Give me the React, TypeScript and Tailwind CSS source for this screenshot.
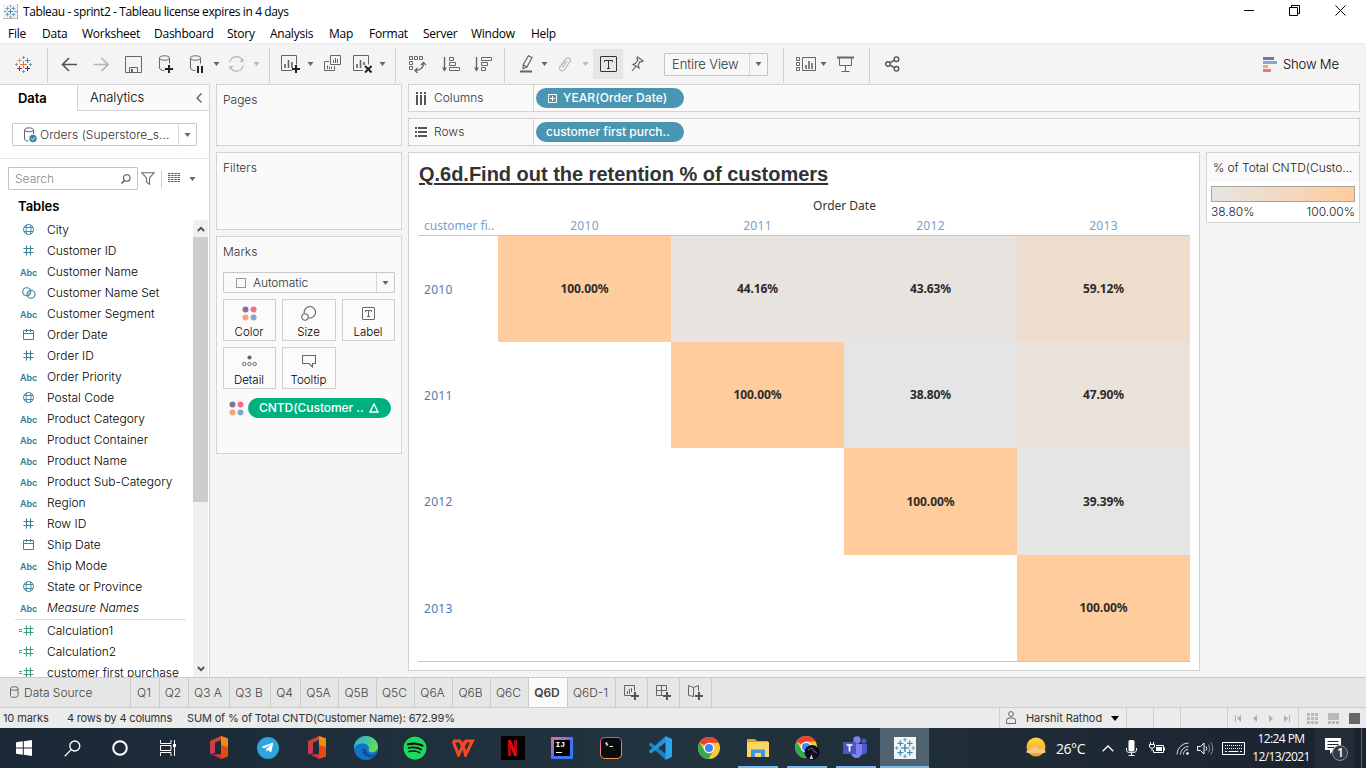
import type { ReactNode } from "react";
import { FaSpotify, FaTelegramPlane } from "react-icons/fa";

const seg = "font-['Open_Sans','Noto_Sans',sans-serif]";

function Svg({ w, h, children, className = "" }: { w: number; h: number; children: ReactNode; className?: string }) {
  return (
    <svg width={w} height={h} viewBox={`0 0 ${w} ${h}`} fill="none" className={`block shrink-0 ${className}`}>
      {children}
    </svg>
  );
}

function Caret({ color = "#666", className = "" }: { color?: string; className?: string }) {
  return (
    <Svg w={7} h={4} className={className}>
      <path d="M.5 0H6.5L3.5 4Z" fill={color} />
    </Svg>
  );
}

function Slot({ className, children }: { className: string; children?: ReactNode }) {
  return <div className={`flex h-full shrink-0 items-center justify-center ${className}`}>{children}</div>;
}

const Sep = () => <div className="mt-[4px] h-[35px] w-px shrink-0 self-start bg-[#d0d0d0]" />;

function TableauMark({ colors, size }: { colors: string[]; size: number }) {
  const [c, a, b, d, e, f, g] = colors;
  return (
    <svg width={size} height={size} viewBox="0 0 17 17" fill="none" className="block">
      <path d="M8.5 5V12M5 8.5H12" stroke={c} />
      <path d="M4.5 2V7M2 4.5H7" stroke={a} />
      <path d="M12.5 2V7M10 4.5H15" stroke={b} />
      <path d="M4.5 10V15M2 12.5H7" stroke={d} />
      <path d="M12.5 10V15M10 12.5H15" stroke={e} />
      <path d="M8.5 0V3M7 1.5H10M8.5 14V17M7 15.5H10" stroke={f} />
      <path d="M1.5 7V10M0 8.5H3M15.5 7V10M14 8.5H17" stroke={g} />
    </svg>
  );
}

const blues = ["#2b6ea3", "#3f8fbd", "#3f8fbd", "#3f8fbd", "#3f8fbd", "#5a9fc6", "#5a9fc6"];

function TitleBar() {
  return (
    <div className={`flex h-6 items-start bg-white text-[12px] text-black ${seg}`}>
      <div className="ml-[3px] mt-[4px] flex h-[15px] w-[15px] items-center justify-center border-b border-r border-[#b5b5b5] bg-[#f5f5f5]">
        <TableauMark colors={blues} size={13} />
      </div>
      <span className="ml-[5px] mt-[4px] whitespace-nowrap leading-4 tracking-[-0.39px]">
        Tableau - sprint2 - Tableau license expires in 4 days
      </span>
      <div className="ml-auto flex">
        <Svg w={10} h={12} className="mr-[35px] mt-[5px]">
          <path d="M0 5.5H10" stroke="#000" />
        </Svg>
        <Svg w={11} h={11} className="mr-[35px] mt-[5px]">
          <path d="M.5 2.5H8.5V10.5H.5ZM2.5 2.5V.5H10.5V8.5H8.5" stroke="#000" />
        </Svg>
        <Svg w={11} h={11} className="mr-[20px] mt-[5px]">
          <path d="M.5.5L10.5 10.5M10.5.5L.5 10.5" stroke="#000" />
        </Svg>
      </div>
    </div>
  );
}

const menus: [string, string][] = [
  ["File", "w-[34px]"],
  ["Data", "w-[40px]"],
  ["Worksheet", "w-[72px]"],
  ["Dashboard", "w-[73px]"],
  ["Story", "w-[43px]"],
  ["Analysis", "w-[59px]"],
  ["Map", "w-[40px]"],
  ["Format", "w-[54px]"],
  ["Server", "w-[48px]"],
  ["Window", "w-[60px]"],
  ["Help", "w-[40px]"],
];

function MenuBar() {
  return (
    <div className={`flex h-[19px] bg-white pl-[8px] text-[12px] leading-[19px] tracking-[-0.25px] text-black ${seg}`}>
      {menus.map(([m, w]) => (
        <span key={m} className={`${w} whitespace-nowrap`}>
          {m}
        </span>
      ))}
    </div>
  );
}

const Database = ({ children }: { children?: ReactNode }) => (
  <Svg w={15} h={19}>
    <path d="M1.5 3.5V13C1.5 14.5 3.5 15.5 6.5 15.5M11.5 3.5V8.5" stroke="#666" />
    <ellipse cx="6.5" cy="3" rx="5" ry="2.2" stroke="#666" />
    {children}
  </Svg>
);

const LabelBox = ({ size, color }: { size: "lg" | "sm"; color: string }) => (
  <div
    className={
      size === "lg"
        ? "flex h-4 w-[17px] items-center justify-center rounded-[1px] border border-[#333]"
        : "flex h-[13px] w-[13px] items-center justify-center rounded-[1px] border border-[#666]"
    }
  >
    <Svg w={size === "lg" ? 9 : 7} h={size === "lg" ? 9 : 7}>
      {size === "lg" ? (
        <path d="M.5 2V.5H8.5V2M4.5.5V8.5M3 8.5H6" stroke={color} />
      ) : (
        <path d="M.5 2V.5H6.5V2M3.5.5V6.5M2 6.5H5" stroke={color} />
      )}
    </Svg>
  </div>
);

function Toolbar() {
  return (
    <div className="flex h-[41px] items-center border-t border-[#ececec] bg-[#f4f4f4]">
      <Slot className="w-[47px]">
        <TableauMark colors={["#e8762c", "#e8a15c", "#5b879b", "#c72035", "#1f447e", "#7199a6", "#7b9db5"]} size={17} />
      </Slot>
      <Sep />
      <Slot className="w-[43px]">
        <Svg w={17} h={15}>
          <path d="M1.5 7.5H16M8 1L1.5 7.5L8 14" stroke="#555" strokeWidth="1.6" />
        </Svg>
      </Slot>
      <Slot className="w-[21px]">
        <Svg w={17} h={15}>
          <path d="M.5 7.5H15M8.5 1L15 7.5L8.5 14" stroke="#b4b4b4" strokeWidth="1.6" />
        </Svg>
      </Slot>
      <Slot className="w-[43px]">
        <Svg w={17} h={17}>
          <path d="M.5.5H16.5V16.5H.5ZM4.5 16.5V11.5H12.5V16.5" stroke="#666" />
          <path d="M6 13H8V16H6Z" fill="#666" />
        </Svg>
      </Slot>
      <Slot className="w-[20px]">
        <Database>
          <path d="M11 10V18M7 14H15" stroke="#222" strokeWidth="2" />
        </Database>
      </Slot>
      <Slot className="w-[42px]">
        <Database>
          <path d="M9 11V18M13 11V18" stroke="#222" strokeWidth="2" />
        </Database>
      </Slot>
      <Caret className="-ml-[4px]" />
      <Slot className="w-[33px]">
        <Svg w={17} h={16}>
          <path d="M2 6A6.5 6.5 0 0 1 14.5 5M15 9.5A6.5 6.5 0 0 1 2.5 11" stroke="#b9b9b9" strokeWidth="1.3" />
          <path d="M15.500 2V6H11.500ZM1.500 14V10H5.500Z" fill="#b9b9b9" />
        </Svg>
      </Slot>
      <Caret color="#b9b9b9" />
      <div className="w-[9px]" />
      <Sep />
      <Slot className="w-[41px]">
        <Svg w={19} h={18}>
          <path d="M11 15.5H.5V.5H15.5V9.5" stroke="#666" />
          <path d="M4 9V13M7.5 5V13M11 7V13" stroke="#666" strokeWidth="1.6" />
          <path d="M15 10V18M11 14H19" stroke="#222" strokeWidth="2" />
        </Svg>
      </Slot>
      <Caret className="-ml-[4px]" />
      <Slot className="w-[36px]">
        <Svg w={17} h={16} className="-mt-[2px]">
          <path d="M6.5.5H16.5V9.5H6.5ZM5 6.5H.5V15.5H10.5V11" stroke="#666" />
          <path d="M9.5 5V8M11.5 3V8M13.5 4V8M3.5 10.5V14M5.5 11.5V14M7.5 11.5V14" stroke="#666" />
        </Svg>
      </Slot>
      <Slot className="w-[25px]">
        <Svg w={19} h={18}>
          <path d="M10 15.5H.5V.5H15.5V9.5" stroke="#666" />
          <path d="M4 9V13M7.5 5V13M11 7V10" stroke="#666" strokeWidth="1.6" />
          <path d="M12 11L18.5 17.5M18.5 11L12 17.5" stroke="#222" strokeWidth="2" />
        </Svg>
      </Slot>
      <Caret className="ml-[4px]" />
      <div className="w-[9px]" />
      <Sep />
      <Slot className="w-[43px]">
        <Svg w={17} h={17}>
          <path d="M.5.5H3.5V3.5H.5ZM5.500 .5H8.500V3.5H5.500ZM10.500.5H13.500V3.5H10.500ZM.5 5.500H3.5V8.500H.5ZM.5 10.500H3.5V13.500H.5Z" stroke="#666" />
          <path d="M6 14.5C11.500 14.5 14.5 12 14.5 7M12 9L14.5 6.5L17 9M8.500 12L6 14.5L8.500 17" stroke="#666" strokeWidth="1.3" />
        </Svg>
      </Slot>
      <Slot className="w-[23px]">
        <Svg w={18} h={15}>
          <path d="M2.5 0V14" stroke="#666" strokeWidth="1.4" />
          <path d="M0 10.5H5L2.5 14.5Z" fill="#666" />
          <path d="M7.5.5H11.5V3.5H7.5ZM7.5 5.5H13.5V8.5H7.5ZM7.5 10.5H17.5V13.5H7.5Z" stroke="#666" />
        </Svg>
      </Slot>
      <Slot className="w-[42px]">
        <Svg w={18} h={15}>
          <path d="M2.5 0V14" stroke="#666" strokeWidth="1.4" />
          <path d="M0 10.5H5L2.5 14.5Z" fill="#666" />
          <path d="M7.5.5H17.5V3.5H7.5ZM7.5 5.5H13.5V8.5H7.5ZM7.5 10.5H11.5V13.5H7.5Z" stroke="#666" />
        </Svg>
      </Slot>
      <Sep />
      <Slot className="w-[43px]">
        <Svg w={13} h={18}>
          <path d="M8.5.8L12 2.5L7 12L3 13.5L3.2 9.8ZM3.5 10L6.8 11.8" stroke="#666" strokeWidth="1.2" />
          <path d="M0 16.5H12" stroke="#666" strokeWidth="2" />
        </Svg>
      </Slot>
      <Caret className="-ml-[7px]" />
      <Slot className="w-[34px]">
        <Svg w={14} h={16}>
          <path
            d="M3.5 9.5L8 3C10 .5 13.5 2.5 12 5.5L6.5 13.5C4.5 16.5.3 14 2 10.8L7 3.5M4.2 11.8L9 5"
            stroke="#b9b9b9"
            strokeWidth="1.2"
          />
        </Svg>
      </Slot>
      <Caret color="#b9b9b9" />
      <div className="w-[4px]" />
      <div className="flex h-[30px] w-[30px] items-center justify-center bg-[#e6e6e6]">
        <LabelBox size="lg" color="#333" />
      </div>
      <Slot className="w-[28px]">
        <Svg w={13} h={16}>
          <path d="M6.5 1L12 4.8L10.8 5.8L9 5.5L7.3 9L8 12L2 8.3L4.5 7.5L6.8 4.2L6 2.5ZM5 10L1 15" stroke="#666" strokeWidth="1.2" />
        </Svg>
      </Slot>
      <div className="ml-[13px] flex h-[23px] w-[104px] items-center rounded-[1px] border border-[#c4c4c4] bg-[#f7f7f7]">
        <span className="w-[84px] whitespace-nowrap pl-[7px] font-['Inter',sans-serif] text-[13px] font-light leading-5 tracking-[-0.1px] text-[#333]">
          Entire View
        </span>
        <div className="h-full w-px bg-[#d6d6d6]" />
        <Caret className="ml-[5px]" />
      </div>
      <div className="w-[15px]" />
      <Sep />
      <Slot className="w-[44px]">
        <Svg w={20} h={14}>
          <path d="M.5.5H3.5V3.5H.5ZM.5 5.5H3.5V8.5H.5ZM.5 10.5H3.5V13.5H.5ZM6.5.5H19.5V13.5H6.5Z" stroke="#666" />
          <path d="M10 8V12M13 4V12M16 6V12" stroke="#666" strokeWidth="1.6" />
        </Svg>
      </Slot>
      <Caret className="-ml-[8px]" />
      <Slot className="w-[37px]">
        <Svg w={17} h={16}>
          <path d="M0 1.5H17" stroke="#666" strokeWidth="2" />
          <path d="M2.5 2V9.5H14.5V2M8.5 10V15M4.5 15.5H12.5" stroke="#666" />
        </Svg>
      </Slot>
      <div className="w-[5px]" />
      <Sep />
      <Slot className="w-[45px]">
        <Svg w={15} h={16}>
          <g stroke="#555" strokeWidth="1.4">
            <circle cx="3" cy="8" r="2.3" />
            <circle cx="11.5" cy="3.2" r="2.3" />
            <circle cx="11.5" cy="12.8" r="2.3" />
            <path d="M5 6.8L9.5 4.2M5 9.2L9.5 11.8" />
          </g>
        </Svg>
      </Slot>
      <Svg w={14} h={15} className="ml-auto">
        <path d="M0 0H11V3H0Z" fill="#85709c" />
        <path d="M0 4H14V7H0Z" fill="#86a8ce" />
        <path d="M0 8H5V11H0Z" fill="#f5a67c" />
        <path d="M0 12H8V15H0Z" fill="#f96d7f" />
      </Svg>
      <span className="ml-[6px] w-[83px] whitespace-nowrap font-['Inter',sans-serif] text-[13px] font-light leading-5 tracking-[-0.15px] text-black">
        Show Me
      </span>
    </div>
  );
}

type Kind = "geo" | "num" | "abc" | "set" | "date" | "calc";
const fields: [string, Kind][] = [
  ["City", "geo"],
  ["Customer ID", "num"],
  ["Customer Name", "abc"],
  ["Customer Name Set", "set"],
  ["Customer Segment", "abc"],
  ["Order Date", "date"],
  ["Order ID", "num"],
  ["Order Priority", "abc"],
  ["Postal Code", "geo"],
  ["Product Category", "abc"],
  ["Product Container", "abc"],
  ["Product Name", "abc"],
  ["Product Sub-Category", "abc"],
  ["Region", "abc"],
  ["Row ID", "num"],
  ["Ship Date", "date"],
  ["Ship Mode", "abc"],
  ["State or Province", "geo"],
  ["Measure Names", "abc"],
];
const calcs = ["Calculation1", "Calculation2", "customer first purchase"];

function FieldIcon({ kind }: { kind: Kind }) {
  if (kind === "abc")
    return (
      <span className="pt-px font-['Inter',sans-serif] text-[9px] font-semibold leading-none tracking-[-0.1px] text-[#357c99]">
        Abc
      </span>
    );
  if (kind === "num")
    return (
      <Svg w={11} h={11}>
        <path d="M3.5.5V10.5M7.5.5V10.5M.5 3.5H10.5M.5 7.5H10.5" stroke="#3f819d" strokeWidth="1.1" />
      </Svg>
    );
  if (kind === "calc")
    return (
      <Svg w={15} h={11} className="-ml-[5px]">
        <path d="M7.5.5V10.5M11.5.5V10.5M4.5 3.5H14.5M4.5 7.5H14.5M0 4.5H3M0 6.5H3" stroke="#3f9f7d" strokeWidth="1.1" />
      </Svg>
    );
  if (kind === "date")
    return (
      <Svg w={11} h={11}>
        <path d="M.5 1.5H10.5V10.5H.5ZM.5 4.5H10.5M3.5 0V3M7.5 0V3" stroke="#3f819d" />
      </Svg>
    );
  if (kind === "set")
    return (
      <Svg w={14} h={12}>
        <circle cx="4.7" cy="4.7" r="4" stroke="#3f819d" strokeWidth="1.1" />
        <circle cx="9" cy="7.3" r="4" stroke="#3f819d" strokeWidth="1.1" />
        <path d="M5.5 5.5L7.5 3.8M6 7.5L8.5 5" stroke="#3f819d" />
      </Svg>
    );
  return (
    <Svg w={11} h={11}>
      <circle cx="5.500" cy="5.500" r="5" stroke="#3f86a5" />
      <path d="M3.500 1Q2.500 5.500 3.500 10M7.500 1Q8.500 5.500 7.500 10M1 3.500H10M1 7.500H10" stroke="#4a8dab" />
    </Svg>
  );
}

function Field({ name, kind }: { name: string; kind: Kind }) {
  return (
    <div className="flex h-[21px] items-center">
      <div className="flex w-[47px] shrink-0 items-center justify-center pl-[10px]">
        <FieldIcon kind={kind} />
      </div>
      <span
        className={`whitespace-nowrap font-['Inter',sans-serif] text-[12px] font-light leading-[21px] text-black ${
          name === "Measure Names" ? "italic" : ""
        }`}
      >
        {name}
      </span>
    </div>
  );
}

function DataPane() {
  return (
    <div className="flex h-full w-[210px] shrink-0 flex-col border-r border-t border-[#d4d4d4] bg-white font-['Inter',sans-serif]">
      <div className="flex h-[26px] shrink-0">
        <div className="w-[77px] pl-[18px] text-[13px] font-semibold leading-[26px] tracking-[-0.1px] text-black">Data</div>
        <div className="flex flex-1 items-center border-b border-l border-[#d4d4d4] bg-[#fafafa] pl-[12px] text-[13px] font-light tracking-[-0.1px] text-black">
          Analytics
          <Svg w={6} h={10} className="ml-auto mr-[7px]">
            <path d="M5.5.5L1 5L5.5 9.5" stroke="#555" strokeWidth="1.2" />
          </Svg>
        </div>
      </div>
      <div className="ml-[12px] mt-[12px] flex h-[23px] w-[185px] shrink-0 items-center rounded-[1px] border border-[#c8c8c8] pl-[10px]">
        <Svg w={14} h={16}>
          <path d="M1.5 3V12C1.5 13.2 3 14 5.5 14M10.5 3V7" stroke="#666" />
          <ellipse cx="6" cy="2.8" rx="4.5" ry="2" stroke="#666" />
          <circle cx="10" cy="11.5" r="3.7" fill="#3e85a3" />
          <path d="M8.2 11.5L9.6 12.9L12 10.2" stroke="#fff" />
        </Svg>
        <span className="ml-[3px] w-[129px] whitespace-nowrap text-[12px] font-light tracking-[0.05px] text-[#333]">Orders (Superstore_s...</span>
        <div className="ml-[9px] h-full w-px bg-[#d8d8d8]" />
        <Caret className="ml-[5px]" />
      </div>
      <div className="mt-[12px] h-px shrink-0 bg-[#e2e2e2]" />
      <div className="ml-[8px] mt-[8px] flex h-[23px] shrink-0 items-center">
        <div className="flex h-[23px] w-[130px] items-center rounded-[1px] border border-[#c4c4c4] pl-[6px]">
          <span className="text-[12px] font-light text-[#888]">Search</span>
          <Svg w={10} h={10} className="ml-auto mr-[6px]">
            <circle cx="5.8" cy="4" r="3.3" stroke="#555" strokeWidth="1.1" />
            <path d="M3.5 6.3L.5 9.5" stroke="#555" strokeWidth="1.3" />
          </Svg>
        </div>
        <Svg w={14} h={13} className="ml-[3px]">
          <path d="M.8.8H13L8.5 6V12.3L5.5 9.8V6Z" stroke="#666" strokeWidth="1.1" />
        </Svg>
        <div className="ml-[6px] h-[18px] w-px bg-[#d0d0d0]" />
        <Svg w={12} h={9} className="-mt-[2px] ml-[6px]">
          <path d="M0 .5H12M0 2.500H12M0 4.500H12M0 6.5H12M0 8.500H12" stroke="#555" strokeDasharray="2.4 .8" />
        </Svg>
        <Caret className="ml-[9px]" />
      </div>
      <div className="ml-[18px] mt-[6px] h-5 shrink-0 text-[13px] font-semibold leading-5 text-black">Tables</div>
      <div className="mt-[4px] flex min-h-0 flex-1 overflow-hidden">
        <div className="-mt-px w-[193px]">
          {fields.map(([n, k]) => (
            <Field key={n} name={n} kind={k} />
          ))}
          <div className="ml-[15px] mr-[7px] mt-px h-px bg-[#dcdcdc]" />
          {calcs.map((n) => (
            <Field key={n} name={n} kind="calc" />
          ))}
        </div>
        <div className="flex w-[15px] flex-col items-center bg-[#f0f0f0]">
          <div className="flex h-[17px] shrink-0 items-center">
            <Svg w={8} h={6}>
              <path d="M.8 5L4 1.8L7.2 5" stroke="#505050" strokeWidth="1.8" />
            </Svg>
          </div>
          <div className="h-[265px] w-full shrink-0 bg-[#cdcdcd]" />
          <Svg w={8} h={6} className="mb-[5px] mt-auto">
            <path d="M.8 1L4 4.2L7.2 1" stroke="#505050" strokeWidth="1.8" />
          </Svg>
        </div>
      </div>
    </div>
  );
}

const Dots = () => (
  <Svg w={15} h={15}>
    <circle cx="3.5" cy="3.5" r="3" fill="#8a7099" />
    <circle cx="11.5" cy="3.5" r="3" fill="#f96d7f" />
    <circle cx="3.5" cy="11.5" r="3" fill="#f2a67c" />
    <circle cx="11.5" cy="11.5" r="3" fill="#82a6cc" />
  </Svg>
);

function MarkButton({ label, className, children }: { label: string; className: string; children: ReactNode }) {
  return (
    <div className={`flex h-[42px] flex-col items-center border border-[#d0d0d0] bg-[#fbfbfb] pr-px ${className}`}>
      <div className="mt-[5px] flex h-[17px] items-center">{children}</div>
      <span className="mt-[2px] text-[11.5px] font-light leading-4 text-black">{label}</span>
    </div>
  );
}

function Cards() {
  return (
    <div className="ml-[6px] flex w-[186px] shrink-0 flex-col gap-[6px] font-['Inter',sans-serif] text-[12px] font-light text-[#333]">
      <div className="h-[62px] border border-[#d4d4d4] bg-[#fafafa] pl-[6px] pt-[5px] leading-5">Pages</div>
      <div className="h-[78px] border border-[#d4d4d4] bg-[#fafafa] pl-[6px] pt-[5px] leading-5">Filters</div>
      <div className="h-[218px] border border-[#d4d4d4] bg-[#fafafa] px-[6px] pt-[5px]">
        <div className="leading-5">Marks</div>
        <div className="mt-[10px] flex h-[21px] items-center rounded-[1px] border border-[#c8c8c8] pl-[12px]">
          <div className="h-[10px] w-[10px] border border-[#999]" />
          <span className="ml-[7px] w-[123px] text-[12px] tracking-[-0.1px]">Automatic</span>
          <div className="h-full w-px bg-[#d8d8d8]" />
          <Caret className="ml-[5px]" />
        </div>
        <div className="mt-[6px] flex flex-wrap gap-[6px]">
          <MarkButton label="Color" className="w-[53px]">
            <Dots />
          </MarkButton>
          <MarkButton label="Size" className="w-[54px]">
            <Svg w={15} h={15}>
              <path d="M3.3 7.5A5.7 5.7 0 1 1 7.5 11.8" stroke="#666" strokeWidth="1.1" />
              <circle cx="4" cy="11" r="3.2" stroke="#666" strokeWidth="1.1" />
            </Svg>
          </MarkButton>
          <MarkButton label="Label" className="w-[53px]">
            <LabelBox size="sm" color="#666" />
          </MarkButton>
          <MarkButton label="Detail" className="w-[53px]">
            <Svg w={15} h={12} className="-mt-[2px]">
              <circle cx="7.5" cy="2.5" r="2.1" fill="#666" />
              <g stroke="#666">
                <circle cx="2.3" cy="9" r="1.7" />
                <circle cx="7.5" cy="9" r="1.7" />
                <circle cx="12.7" cy="9" r="1.7" />
              </g>
            </Svg>
          </MarkButton>
          <MarkButton label="Tooltip" className="w-[54px]">
            <Svg w={14} h={14} className="-mt-[2px]">
              <path d="M.5 1.5H13.5V9.5H10.5V13L7 9.5H.5Z" stroke="#666" strokeWidth="1.1" />
            </Svg>
          </MarkButton>
        </div>
        <div className="-mr-px mt-[9px] flex items-center pl-[6px]">
          <Dots />
          <div className="ml-[4px] flex h-5 w-[143px] items-center rounded-full bg-[#00b180] pl-[11px] text-[12px] font-medium tracking-[-0.05px] text-white">
            <span className="w-[110px] whitespace-nowrap">CNTD(Customer ..</span>
            <Svg w={10} h={10}>
              <path d="M5 1L9 9H1Z" stroke="#fff" strokeWidth="1.3" />
            </Svg>
          </div>
        </div>
      </div>
    </div>
  );
}

function Shelf({ label, icon, children }: { label: string; icon: ReactNode; children: ReactNode }) {
  return (
    <div className="flex h-[28px] w-[952px] shrink-0 items-center border border-[#d4d4d4] bg-[#fafafa] text-[12px] font-light text-[#333]">
      <div className="flex h-full w-[125px] items-center border-r border-[#d4d4d4] pl-[6px]">
        {icon}
        <span className="ml-[7px]">{label}</span>
      </div>
      <div className="ml-[2px] flex h-5 w-[148px] items-center rounded-full bg-[#4996b2] text-[12px] font-medium text-white">
        {children}
      </div>
    </div>
  );
}

const years = ["2010", "2011", "2012", "2013"];
type Cell = [string, string] | null;
const grid: Cell[][] = [
  [["100.00%", "bg-[#ffcc9e]"], ["44.16%", "bg-[#e7e3df]"], ["43.63%", "bg-[#e7e3df]"], ["59.12%", "bg-[#eedccd]"]],
  [null, ["100.00%", "bg-[#ffcc9e]"], ["38.80%", "bg-[#e5e5e5]"], ["47.90%", "bg-[#e9e1da]"]],
  [null, null, ["100.00%", "bg-[#ffcc9e]"], ["39.39%", "bg-[#e5e5e4]"]],
  [null, null, null, ["100.00%", "bg-[#ffcc9e]"]],
];
const rowHeights = ["h-[106px]", "h-[106px]", "h-[107px]", "h-[106px]"];

function Sheet() {
  return (
    <div className="flex h-[519px] w-[792px] flex-col border border-[#d4d4d4] bg-white px-[9px] font-['Noto_Sans',sans-serif] text-[12px]">
      <div className="mt-[8px] h-[26px] pl-[1px] font-['Liberation_Sans',sans-serif] text-[20px] font-bold leading-[26px] tracking-[-0.02px] text-[#333] underline decoration-2 underline-offset-[2px]">
        Q.6d.Find out the retention % of customers
      </div>
      <div className="mt-[9px] flex h-[20px] justify-center pl-[81px] leading-5 text-[#333]">Order Date</div>
      <div className="flex h-[20px] border-b border-[#c8c8c8] leading-5 text-[#76a2cb]">
        <span className="w-[80px] whitespace-nowrap pl-[6px]">customer fi..</span>
        {years.map((y) => (
          <span key={y} className="w-[173px] text-center tracking-[0.3px]">
            {y}
          </span>
        ))}
      </div>
      {grid.map((row, r) => (
        <div key={years[r]} className={`flex w-[772px] items-stretch ${rowHeights[r]}`}>
          <div className="flex w-[80px] items-center pl-[6px] pt-px tracking-[0.3px] text-[#4c7cb3]">{years[r]}</div>
          {row.map((c, i) => (
            <div
              key={years[i]}
              className={`flex w-[173px] items-center justify-center text-[12px] font-bold tracking-[-0.1px] text-[#2b2b2b] ${c ? c[1] : ""}`}
            >
              {c ? c[0] : null}
            </div>
          ))}
        </div>
      ))}
      <div className="h-px bg-[#c8c8c8]" />
    </div>
  );
}

function Workspace() {
  return (
    <div className="ml-[6px] flex flex-col gap-[6px] font-['Inter',sans-serif]">
      <Shelf
        label="Columns"
        icon={
          <Svg w={12} h={13}>
            <path d="M2 0V2M6 0V2M10 0V2M2 3V13M6 3V13M10 3V13" stroke="#555" strokeWidth="2" />
          </Svg>
        }
      >
        <Svg w={9} h={9} className="ml-[12px] mr-[6px]">
          <path d="M.5.5H8.5V8.5H.5ZM4.5 2V7M2 4.5H7" stroke="#fff" />
        </Svg>
        <span className="whitespace-nowrap text-[12px] tracking-[0.08px]">YEAR(Order Date)</span>
      </Shelf>
      <Shelf
        label="Rows"
        icon={
          <Svg w={12} h={10}>
            <path d="M0 1H2M3 1H12M0 5H2M3 5H12M0 9H2M3 9H12" stroke="#555" strokeWidth="2" />
          </Svg>
        }
      >
        <span className="whitespace-nowrap pl-[10px]">customer first purch..</span>
      </Shelf>
      <div className="flex gap-[6px]">
        <Sheet />
        <div className="h-[71px] w-[154px] border border-[#d4d4d4] bg-white text-[12px] font-light text-[#222]">
          <div className="h-[29px] whitespace-nowrap bg-[#fafafa] pl-[6px] leading-[30px] tracking-[-0.05px]">% of Total CNTD(Custo...</div>
          <div className="ml-[4px] mt-[4px] h-4 w-[144px] border border-[#a9a59c] bg-linear-to-r from-[#e5e5e5] to-[#ffcb9b]" />
          <div className="flex justify-between px-[4px] leading-[19px]">
            <span>38.80%</span>
            <span>100.00%</span>
          </div>
        </div>
      </div>
    </div>
  );
}

const tabs: [string, string][] = [
  ["Q1", "w-[29px]"],
  ["Q2", "w-[29px]"],
  ["Q3 A", "w-[41px]"],
  ["Q3 B", "w-[41px]"],
  ["Q4", "w-[30px]"],
  ["Q5A", "w-[38px]"],
  ["Q5B", "w-[38px]"],
  ["Q5C", "w-[38px]"],
  ["Q6A", "w-[38px]"],
  ["Q6B", "w-[38px]"],
  ["Q6C", "w-[38px]"],
  ["Q6D", "w-[39px]"],
  ["Q6D-1", "w-[48px]"],
];

function SheetTabs() {
  return (
    <div className="flex h-[31px] shrink-0 border-y border-[#cbcbcb] bg-[#e6e6e6] font-['Inter',sans-serif] text-[12px] font-light leading-[29px] text-[#444]">
      <div className="flex w-[131px] items-center border-r border-[#cbcbcb] pl-[10px]">
        <Svg w={9} h={12} className="-mt-[2px]">
          <path d="M.5 2.5V9.5C.5 12 8 12 8 9.5V2.5" stroke="#666" />
          <ellipse cx="4.3" cy="2.5" rx="3.8" ry="1.8" stroke="#666" />
        </Svg>
        <span className="ml-[5px] whitespace-nowrap">Data Source</span>
      </div>
      {tabs.map(([t, w]) => (
        <div
          key={t}
          className={`shrink-0 whitespace-nowrap border-r border-[#cbcbcb] pr-[2px] text-center ${w} ${
            t === "Q6D" ? "bg-[#fafafa] font-semibold tracking-[-0.1px]" : ""
          }`}
        >
          {t}
        </div>
      ))}
      <div className="flex w-[32px] items-center justify-center border-r border-[#cbcbcb]">
        <Svg w={15} h={15}>
          <path d="M7 10.5H.5V.5H10.5V6M3.5 6V9M5.5 4V9M7.5 3V7" stroke="#666" />
          <path d="M11 7V15M7 11H15" stroke="#555" strokeWidth="2" />
        </Svg>
      </div>
      <div className="flex w-[32px] items-center justify-center border-r border-[#cbcbcb]">
        <Svg w={15} h={15}>
          <path d="M7 10.5H.5V.5H10.5V6M.5 5.5H10.5M5.5.5V10.5" stroke="#666" />
          <path d="M11 7V15M7 11H15" stroke="#555" strokeWidth="2" />
        </Svg>
      </div>
      <div className="flex w-[32px] items-center justify-center border-r border-[#cbcbcb]">
        <Svg w={15} h={15}>
          <path d="M6 11.5L.5 10.5V.5L5.5 2.5L10.5.5V6M5.5 2.5V11.5" stroke="#666" />
          <path d="M11 7V15M7 11H15" stroke="#555" strokeWidth="2" />
        </Svg>
      </div>
    </div>
  );
}

function StatusBar() {
  return (
    <div className="flex h-[20px] shrink-0 bg-[#ebebeb] font-['Inter',sans-serif] text-[11px] leading-5 text-[#333]">
      <span className="w-[64px] whitespace-nowrap pl-[3px] tracking-[-0.1px]">10 marks</span>
      <span className="w-[120px] whitespace-nowrap pl-[3px] tracking-[-0.18px]">4 rows by 4 columns</span>
      <span className="whitespace-nowrap pl-[3px] tracking-[-0.16px]">SUM of % of Total CNTD(Customer Name): 672.99%</span>
      <div className="ml-auto flex">
        <div className="flex w-[127px] items-center border-l border-[#cfcfcf] pl-[6px]">
          <Svg w={10} h={13} className="-mt-[2px]">
            <circle cx="5" cy="3" r="2.4" stroke="#666" />
            <path d="M.5 12.5V9.5C.5 7 3 7 5 7S9.5 7 9.5 9.5V12.5Z" stroke="#666" />
          </Svg>
          <span className="ml-[10px] w-[85px] whitespace-nowrap tracking-[-0.05px]">Harshit Rathod</span>
          <Svg w={8} h={5}>
            <path d="M0 0H8L4 5Z" fill="#000" />
          </Svg>
        </div>
        <div className="w-[27px] border-l border-[#cfcfcf]" />
        <div className="w-[27px] border-l border-[#cfcfcf]" />
        <div className="w-[47px] border-l border-[#cfcfcf]" />
        <div className="flex w-[71px] items-center gap-[12px] border-l border-[#cfcfcf] pl-[7px]">
          <Svg w={6} h={7}>
            <path d="M0 0H1V7H0ZM6 0V7L2 3.5Z" fill="#b0b0b0" />
          </Svg>
          <Svg w={4} h={7}>
            <path d="M4 0V7L0 3.5Z" fill="#b0b0b0" />
          </Svg>
          <Svg w={4} h={7}>
            <path d="M0 0V7L4 3.5Z" fill="#b0b0b0" />
          </Svg>
          <Svg w={6} h={7} className="-ml-px">
            <path d="M5 0H6V7H5ZM0 0V7L4 3.5Z" fill="#b0b0b0" />
          </Svg>
        </div>
        <div className="flex w-[68px] items-center gap-[10px] border-l border-[#cfcfcf] pl-[8px]">
          <Svg w={11} h={11}>
            <path d="M0 0H3V3H0ZM4 0H7V3H4ZM8 0H11V3H8ZM0 4H3V7H0ZM4 4H7V7H4ZM8 4H11V7H8ZM0 8H3V11H0ZM4 8H7V11H4ZM8 8H11V11H8Z" fill="#bababa" />
          </Svg>
          <Svg w={11} h={11}>
            <path d="M0 0H11V7H0ZM0 8H3V11H0ZM4 8H7V11H4ZM8 8H11V11H8Z" fill="#bababa" />
          </Svg>
          <Svg w={11} h={11}>
            <path d="M0 0H11V11H0Z" fill="#666" />
          </Svg>
        </div>
      </div>
    </div>
  );
}

const Office = () => (
  <Svg w={18} h={23}>
    <defs>
      <linearGradient id="off" x1="0" y1="0" x2="0" y2="1">
        <stop offset="0" stopColor="#d8431f" />
        <stop offset="1" stopColor="#c0396b" />
      </linearGradient>
    </defs>
    <path d="M0 5L11 0V4L5 6.5V17L0 18.5Z" fill="url(#off)" />
    <path d="M11 0L18 2.5V20.5L11 23Z" fill="#e64a0f" />
    <path d="M11 0L18 2.5V11L11 9Z" fill="#f08a12" />
    <path d="M2 18.5L11 18V23Z" fill="#d2303a" />
  </Svg>
);

const Chrome = ({ children }: { children?: ReactNode }) => (
  <Svg w={24} h={24}>
    <circle cx="12" cy="12" r="11" fill="#fcc934" />
    <path d="M12 12L2.5 6.5A11 11 0 0 1 21.5 6.5L12 6.5Z" fill="#ea4335" />
    <path d="M2.5 6.5A11 11 0 0 0 11.5 23L16.5 14.5L12 12L7.5 14.5Z" fill="#34a853" />
    <path d="M12 6.5H21.5A11 11 0 0 0 12 1Z" fill="#ea4335" />
    <circle cx="12" cy="12" r="5.3" fill="#fff" />
    <circle cx="12" cy="12" r="4.1" fill="#4285f4" />
    {children}
  </Svg>
);

function TaskIcon({ children, active = false, open = false }: { children: ReactNode; active?: boolean; open?: boolean }) {
  return (
    <div className={`flex h-10 w-[49px] shrink-0 flex-col items-center ${active ? "bg-[#4f6470]" : ""}`}>
      <div className="flex h-[38px] items-center justify-center pt-[1px]">{children}</div>
      <div className={`h-[2px] ${active ? "w-full bg-[#76b9ed]" : open ? "w-[40px] bg-[#76b9ed]" : ""}`} />
    </div>
  );
}

function Taskbar() {
  return (
    <div className={`flex h-10 shrink-0 items-center bg-linear-to-r from-[#1b2836] via-[#22343f] to-[#1b222e] text-white ${seg}`}>
      <Slot className="w-[48px]">
        <Svg w={16} h={16}>
          <path d="M0 2.3L6.8 1.3V7.5H0ZM7.8 1.2L16 0V7.5H7.8ZM0 8.5H6.8V14.7L0 13.7ZM7.8 8.5H16V16L7.8 14.8Z" fill="#fff" />
        </Svg>
      </Slot>
      <Slot className="w-[48px]">
        <Svg w={17} h={17}>
          <circle cx="10.8" cy="6" r="5" stroke="#fff" strokeWidth="1.3" />
          <path d="M7.2 9.6L.7 16.2" stroke="#fff" strokeWidth="1.3" />
        </Svg>
      </Slot>
      <Slot className="w-[48px]">
        <Svg w={16} h={16}>
          <circle cx="8" cy="8" r="6.8" stroke="#fff" strokeWidth="2" />
        </Svg>
      </Slot>
      <Slot className="w-[48px]">
        <Svg w={16} h={16}>
          <path d="M.5 0V3.5H11V0M.5 16V12.5H11V16M.5 5.5H11V10.5H.5ZM14.5 0V16" stroke="#fff" />
          <path d="M13 4H16V7H13Z" fill="#fff" />
        </Svg>
      </Slot>
      <div className="w-[2px] shrink-0" />
      <TaskIcon>
        <Office />
      </TaskIcon>
      <TaskIcon>
        <div className="flex h-[22px] w-[22px] items-center justify-center rounded-full bg-[#30a3dc] text-[13px]">
          <FaTelegramPlane />
        </div>
      </TaskIcon>
      <TaskIcon>
        <Office />
      </TaskIcon>
      <TaskIcon>
        <Svg w={24} h={24}>
          <defs>
            <linearGradient id="edgeTop" x1="0" y1="0" x2="1" y2=".5">
              <stop offset="0" stopColor="#2ba9e6" />
              <stop offset="1" stopColor="#5fdc5c" />
            </linearGradient>
          </defs>
          <circle cx="12" cy="12" r="12" fill="#1173c9" />
          <path d="M0 11C1 4 6 0 12 0C19 0 24 5 24 11C24 15 20 17 16 16C14 15.3 14.5 14 15 12.5C15 9 12 7.5 9 7.5C5 7.5 1 9 0 13Z" fill="url(#edgeTop)" />
          <path d="M9 12C7 18 12 22 19 21.5C22 20 23 18 22 18C18 20 13 19 12.5 14Z" fill="#134f96" />
        </Svg>
      </TaskIcon>
      <TaskIcon>
        <div className="flex h-[24px] w-[24px] items-center justify-center rounded-full bg-[#111] text-[24px] text-[#1ed760]">
          <FaSpotify />
        </div>
      </TaskIcon>
      <TaskIcon>
        <Svg w={23} h={18}>
          <path d="M1 2H8L11 8M1 2L6.5 16L11 6L13.5 16L20.5 2H14L12 6" stroke="#f8491e" strokeWidth="3" />
        </Svg>
      </TaskIcon>
      <TaskIcon>
        <div className="flex h-[24px] w-[24px] items-center justify-center bg-black">
          <Svg w={9} h={16}>
            <path d="M0 0H3V16H0ZM6 0H9V16H6Z" fill="#b20710" />
            <path d="M0 0H3L9 16H6Z" fill="#e50914" />
          </Svg>
        </div>
      </TaskIcon>
      <TaskIcon>
        <div className="flex h-[22px] w-[22px] items-center justify-center bg-linear-to-br from-[#fc5b8c] via-[#4d6cf5] to-[#1583f5]">
          <div className="flex h-4 w-4 flex-col bg-black pl-[2px] pt-px font-['Liberation_Mono',monospace] text-[8px] font-bold leading-[8px]">
            IJ
            <div className="mt-[3px] h-px w-[6px] bg-white" />
          </div>
        </div>
      </TaskIcon>
      <TaskIcon>
        <div className="flex h-[22px] w-[22px] items-center justify-center rounded-[5px] bg-linear-to-b from-[#e83fb0] to-[#f0a040]">
          <div className="h-[20px] w-[20px] rounded-[4px] bg-[#0c0c0c] pl-[3px] pt-[2px]">
            <Svg w={10} h={9}>
              <path d="M3 2L1.500 4H4L2.500 6M5.500 6.500H9" stroke="#fff" />
            </Svg>
          </div>
        </div>
      </TaskIcon>
      <TaskIcon>
        <Svg w={24} h={24}>
          <path d="M1 8L3 6.5L18 18V24L1.5 9.5Z" fill="#1b80c4" />
          <path d="M1 16L3 17.5L18 6V0L1 15Z" fill="#2394dc" />
          <path d="M17.5 0L24 3V21L17.5 24Z" fill="#2ba5ee" />
        </Svg>
      </TaskIcon>
      <TaskIcon>
        <Chrome />
      </TaskIcon>
      <TaskIcon open>
        <Svg w={22} h={18}>
          <path d="M0 0H8L10 2H21V5H0Z" fill="#e0a219" />
          <path d="M0 3H22V18H0Z" fill="#fcd462" />
          <path d="M4 18V10.5H18V18H14V14H8V18Z" fill="#3c97dc" />
        </Svg>
      </TaskIcon>
      <TaskIcon open>
        <Svg w={26} h={26}>
          <g>
            <circle cx="12" cy="12" r="11" fill="#fcc934" />
            <path d="M12 12L2.5 6.5A11 11 0 0 1 21.5 6.5L12 6.5Z" fill="#ea4335" />
            <path d="M2.5 6.5A11 11 0 0 0 11.5 23L16.5 14.5L12 12L7.5 14.5Z" fill="#34a853" />
            <circle cx="12" cy="12" r="5.3" fill="#fff" />
            <circle cx="12" cy="12" r="4.1" fill="#4285f4" />
          </g>
          <circle cx="18" cy="17.500" r="7.5" fill="#0d0e18" />
          <path d="M14 15L18 13L20 16L23 18" stroke="#4a4f86" strokeWidth="1.3" />
          <path d="M15.500 24L17.500 19.500L19 24Z" fill="#c9d2ee" />
        </Svg>
      </TaskIcon>
      <TaskIcon open>
        <Svg w={25} h={23}>
          <circle cx="14" cy="4" r="3.7" fill="#7b83eb" />
          <circle cx="21" cy="5" r="2.5" fill="#5059c9" />
          <path d="M17 8H24V15C24 19 18 20 17 16Z" fill="#5059c9" />
          <path d="M8 8H19V16C19 24 8 24 8 16Z" fill="#7b83eb" />
          <path d="M0 6H13V18H0Z" fill="#4b53bc" />
          <path d="M3.5 9H9.5M6.5 9V15.5" stroke="#fff" strokeWidth="1.7" />
        </Svg>
      </TaskIcon>
      <TaskIcon active>
        <div className="flex h-[22px] w-[22px] items-center justify-center bg-[#f4f4f4]">
          <TableauMark colors={blues} size={20} />
        </div>
      </TaskIcon>
      <div className="ml-auto flex h-full items-center">
        <Svg w={24} h={22}>
          <defs>
            <linearGradient id="sun" x1="0" y1="0" x2="0" y2="1">
              <stop offset="0" stopColor="#ffd93b" />
              <stop offset="1" stopColor="#f39a1d" />
            </linearGradient>
          </defs>
          <circle cx="12" cy="10" r="9.5" fill="url(#sun)" />
          <path d="M4 16C1 16 2 13 6 13C8 8 14 9 15 12C19 11 23 13 21 16Z" fill="#f1c88c" />
        </Svg>
        <span className="ml-[8px] w-[46px] text-[14px] tracking-[-0.45px]">26°C</span>
        <Svg w={12} h={7} className="mr-[12px]">
          <path d="M.7 6.3L6 1L11.3 6.3" stroke="#fff" strokeWidth="1.3" />
        </Svg>
        <Svg w={11} h={16} className="mr-[12px]">
          <rect x="2.500" y="0" width="6" height="11.500" rx="1.500" fill="#fff" />
          <path d="M.5 8V10.500C.5 13.500 10.500 13.500 10.500 10.500V8M5.5 12.5V15.5M2.5 15.5H8.5" stroke="#fff" />
        </Svg>
        <Svg w={16} h={12} className="mr-[11px]">
          <path d="M7 3.5H14.5V10.5H4.5V8M15.5 5.5V8.5M1.5 0V2M4.5 0V2M.5 2.5H5.5V5L3 6.5L.5 5ZM3 6.5V9" stroke="#fff" />
          <path d="M7 5H13V9H7Z" fill="#fff" />
        </Svg>
        <Svg w={13} h={13} className="mr-[8px]">
          <path d="M10.5 12A1 1 0 0 1 12 11M7.5 12.5A5 5 0 0 1 12 7.5M4.5 12.5A8 8 0 0 1 12.5 4.5M1 12.5A11.5 11.5 0 0 1 12.5 1" stroke="#ddd" />
          <circle cx="11.5" cy="11.5" r="1.3" fill="#fff" />
        </Svg>
        <Svg w={17} h={13} className="mr-[8px]">
          <path d="M.5 4.5H3.5L7 1V12L3.5 8.5H.5ZM9 4.5Q10.5 6.5 9 8.5" stroke="#fff" />
          <path d="M11.5 2.5Q14 6.5 11.5 10.5M14 .5Q17.5 6.5 14 12.5" stroke="#8a929a" />
        </Svg>
        <Svg w={23} h={13}>
          <path d="M.5.5H22.5V12.5H.5Z" stroke="#fff" />
          <path d="M3 3.5H20M3 6.5H20" stroke="#fff" strokeDasharray="1 1" />
          <path d="M3 9.5H5M6.5 9.5H16.5M18 9.5H20" stroke="#fff" />
        </Svg>
        <div className="ml-[5px] mr-px w-[62px] whitespace-nowrap text-center text-[12px] leading-[18px] tracking-[-0.6px]">
          <div>12:24 PM</div>
          <div>12/13/2021</div>
        </div>
        <div className="ml-px flex h-full w-[40px] items-center justify-center bg-[#252c38]">
          <div className="relative ml-[4px] mt-[2px]">
            <Svg w={24} h={24}>
              <path d="M1 1H17V13H10L6 17V13H1Z" fill="#fff" />
              <path d="M3.5 4.5H14.5M3.5 7.5H14.5M3.5 10.5H10" stroke="#222936" />
              <circle cx="16" cy="16" r="7.5" fill="#363b42" stroke="#8b9095" />
            </Svg>
            <span className="absolute left-[13px] top-[8px] text-[12px] font-semibold leading-4">1</span>
          </div>
        </div>
        <div className="ml-[7px] mr-[4px] h-full w-px bg-[#5c6570]" />
      </div>
    </div>
  );
}

export default function App() {
  return (
    <div className="flex h-[768px] w-[1366px] flex-col overflow-hidden bg-[#f4f4f4]">
      <TitleBar />
      <MenuBar />
      <Toolbar />
      <div className="flex h-[593px] shrink-0">
        <DataPane />
        <Cards />
        <Workspace />
      </div>
      <SheetTabs />
      <StatusBar />
      <Taskbar />
    </div>
  );
}
